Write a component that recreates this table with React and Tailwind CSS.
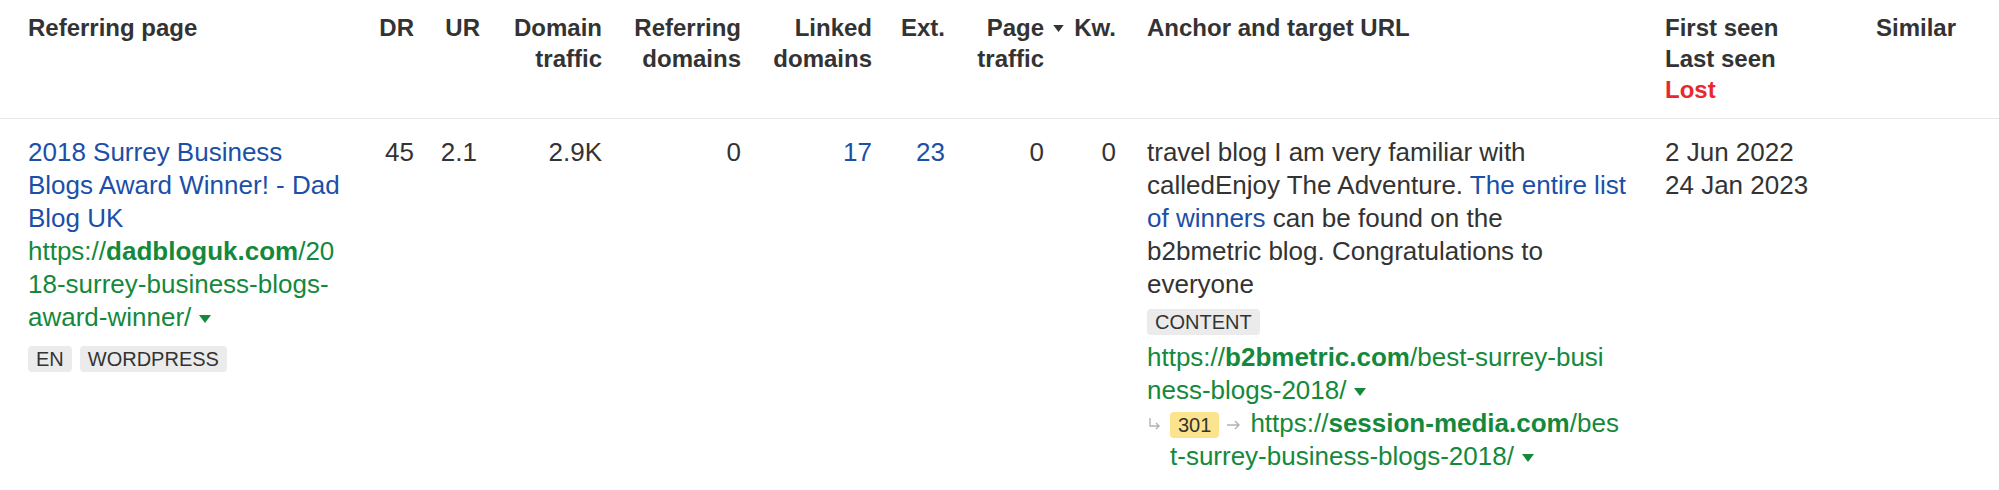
import React from "react";

const Caret = ({ className }) => (
  <svg viewBox="0 0 12 8" className={className}>
    <path d="M0 0h12L6 8z" fill="currentColor" />
  </svg>
);

const Tag = ({ children, className = "" }) => (
  <span
    className={
      "inline-flex items-center h-[26px] px-2 rounded bg-[#ebebeb] text-[20px] leading-none text-[#333] " +
      className
    }
  >
    {children}
  </span>
);

const App = () => {
  return (
    <div className="w-[1999px] min-h-[490px] bg-white text-[#333] font-['Liberation_Sans',Arial,sans-serif]">
      {/* header */}
      <div className="flex items-start border-b border-[#e6e6e6] pt-3 pb-[13px] text-[24px] leading-[31px] font-bold">
        <div className="w-[360px] pl-[28px]">Referring page</div>
        <div className="w-[54px] text-right">DR</div>
        <div className="w-[66px] text-right">UR</div>
        <div className="w-[122px] text-right">Domain traffic</div>
        <div className="w-[139px] text-right">Referring domains</div>
        <div className="w-[131px] text-right">Linked domains</div>
        <div className="w-[73px] text-right">Ext.</div>
        <div className="w-[119px] flex justify-end items-start gap-[9px]">
          <span className="text-right">Page traffic</span>
          <Caret className="w-[11px] h-[7px] mt-[13px] shrink-0 text-[#333]" />
        </div>
        <div className="w-[52px] text-right">Kw.</div>
        <div className="w-[549px] pl-[31px]">Anchor and target URL</div>
        <div className="w-[211px] flex flex-col">
          <span>First seen</span>
          <span>Last seen</span>
          <span className="text-[#e8282e]">Lost</span>
        </div>
        <div className="w-[123px]">Similar</div>
      </div>

      {/* row */}
      <div className="flex items-start pt-[17px] text-[26px] leading-[33px]">
        <div className="w-[360px] pl-[28px] pr-[14px]">
          <a className="text-[#1c4fa8]">
            2018 Surrey Business Blogs Award Winner! - Dad Blog UK
          </a>
          <div className="text-[#14893c]">
            https://<b>dadbloguk.com</b>/20
            <br />
            18-surrey-business-blogs-
            <br />
            award-winner/
            <Caret className="inline-block w-3 h-2 ml-2 align-middle" />
          </div>
          <div className="flex gap-2 mt-3">
            <Tag>EN</Tag>
            <Tag>WORDPRESS</Tag>
          </div>
        </div>
        <div className="w-[54px] text-right">45</div>
        <div className="w-[66px] text-right pr-[3px]">2.1</div>
        <div className="w-[122px] text-right">2.9K</div>
        <div className="w-[139px] text-right">0</div>
        <div className="w-[131px] text-right text-[#1c4fa8]">17</div>
        <div className="w-[73px] text-right text-[#1c4fa8]">23</div>
        <div className="w-[119px] text-right pr-[20px]">0</div>
        <div className="w-[52px] text-right">0</div>
        <div className="w-[549px] pl-[31px]">
          <div className="w-[490px]">
            travel blog I am very familiar with calledEnjoy The Adventure.{" "}
            <a className="text-[#1c4fa8]">The entire list of winners</a> can
            be found on the
            <br />
            b2bmetric blog. Congratulations to everyone
          </div>
          <Tag className="mt-2">CONTENT</Tag>
          <div className="mt-1 text-[#14893c]">
            https://<b>b2bmetric.com</b>/best-surrey-busi
            <br />
            ness-blogs-2018/
            <Caret className="inline-block w-3 h-2 ml-2 align-middle" />
          </div>
          <div className="flex items-start gap-2 pl-px">
            <svg viewBox="0 0 14 14" className="w-[14px] h-[14px] mt-[10px] shrink-0 text-[#b3b3b3]">
              <path d="M2 1v8h9M8 6l3 3-3 3" fill="none" stroke="currentColor" strokeWidth="1.4" />
            </svg>
            <div className="text-[#14893c]">
              <span className="inline-block h-[26px] px-2 rounded bg-[#fce38d] text-[20px] leading-[26px] text-[#333] align-middle">
                301
              </span>
              <svg viewBox="0 0 15 10" className="inline-block w-[15px] h-[10px] mx-[7px] align-middle text-[#b3b3b3]">
                <path d="M1 5h12M9 1l4 4-4 4" fill="none" stroke="currentColor" strokeWidth="1.4" />
              </svg>
              <span className="ml-[2px]">
                https://<b>session-media.com</b>/bes
              </span>
              <br />
              t-surrey-business-blogs-2018/
              <Caret className="inline-block w-3 h-2 ml-2 align-middle" />
            </div>
          </div>
        </div>
        <div className="w-[211px] flex flex-col">
          <span>2 Jun 2022</span>
          <span>24 Jan 2023</span>
        </div>
        <div className="w-[123px]"></div>
      </div>
    </div>
  );
};

export default App;
